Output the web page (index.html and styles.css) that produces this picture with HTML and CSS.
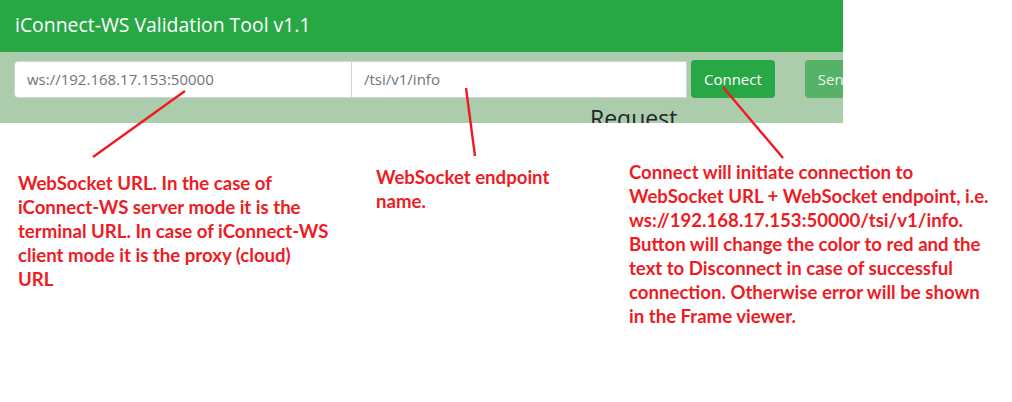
FILE: index.html
```html
<!DOCTYPE html>
<html lang="en">
<head>
<meta charset="utf-8">
<title>iConnect-WS Validation Tool v1.1</title>
<link rel="stylesheet" href="styles.css">
</head>
<body>
<div class="page">
  <div class="app">
    <header class="navbar">
      <span class="brand">iConnect-WS Validation Tool v1.1</span>
    </header>
    <section class="toolbar">
      <div class="controls">
        <div class="input-group">
          <input class="form-control url" type="text" placeholder="ws://192.168.17.153:50000">
          <input class="form-control endpoint" type="text" placeholder="/tsi/v1/info">
        </div>
        <button class="btn btn-connect" type="button">Connect</button>
        <button class="btn btn-send" type="button" disabled>Send</button>
      </div>
      <h4 class="panel-title">Request</h4>
    </section>
  </div>

  <svg class="arrows" width="1012" height="402" viewBox="0 0 1012 402">
    <line x1="185" y1="91" x2="93" y2="157"/>
    <line x1="466" y1="88" x2="475" y2="156"/>
    <line x1="723" y1="87" x2="783" y2="158"/>
  </svg>

  <p class="note note-url">WebSocket URL. In the case of<br>iConnect-WS server mode it is the<br>terminal URL. In case of iConnect-WS<br>client mode it is the proxy (cloud)<br>URL</p>
  <p class="note note-endpoint">WebSocket endpoint<br>name.</p>
  <p class="note note-connect">Connect will initiate connection to<br>WebSocket URL + WebSocket endpoint, i.e.<br>ws://192.168.17.153:50000/tsi/v1/info.<br>Button will change the color to red and the<br>text to Disconnect in case of successful<br>connection. Otherwise error will be shown<br>in the Frame viewer.</p>
</div>
</body>
</html>
```

FILE: styles.css
```css
* { box-sizing: border-box; }

html, body {
  margin: 0;
  padding: 0;
  background: #ffffff;
}

.page {
  position: relative;
  width: 1012px;
  height: 402px;
  overflow: hidden;
  font-family: "Open Sans", "Noto Sans", sans-serif;
}

.app {
  width: 843px;
  height: 123px;
  overflow: hidden;
}

.navbar {
  height: 52px;
  background: #28a745;
  padding: 0 15px;
  display: flex;
  align-items: center;
}

.brand {
  color: #ffffff;
  font-size: 19.4px;
  line-height: 24px;
  margin-top: -2px;
}

.toolbar {
  background: #accdac;
  height: 71px;
  padding: 8px 0 0 14px;
}

.controls {
  display: flex;
  align-items: center;
  height: 38px;
}

.input-group {
  display: flex;
  width: 673px;
}

.form-control {
  height: 37px;
  border: 1px solid #ced4da;
  background: #ffffff;
  font-family: inherit;
  font-size: 15px;
  color: #495057;
  padding: 0 12px;
  outline: none;
}

.form-control::placeholder {
  color: #6c757d;
  opacity: 1;
}

.url {
  width: 338px;
  border-radius: 4px 0 0 4px;
}

.endpoint {
  width: 335px;
  border-left: none;
  border-radius: 0;
}

.btn {
  height: 38px;
  border: none;
  border-radius: 4px;
  color: #ffffff;
  font-family: inherit;
  font-size: 15px;
  padding: 0 13px;
}

.btn-connect {
  margin-left: 4px;
  width: 84px;
  background: #28a745;
}

.btn-send {
  margin-left: 30px;
  width: 70px;
  background: #55b267;
  text-align: left;
  color: #ecf6ee;
}

.panel-title {
  margin: 6px 0 0 576px;
  font-size: 23px;
  font-weight: 400;
  line-height: 28px;
  color: #212529;
}

.arrows {
  position: absolute;
  left: 0;
  top: 0;
  pointer-events: none;
}

.arrows line {
  stroke: #ed1c24;
  stroke-width: 2.4;
}

.note {
  position: absolute;
  margin: 0;
  color: #ed1c24;
  font-family: "Lato", "Liberation Sans", sans-serif;
  font-weight: 700;
  font-size: 18.6px;
  line-height: 24px;
  white-space: nowrap;
}

.note-url { left: 18px; top: 171px; }
.note-endpoint { left: 376px; top: 165px; }
.note-connect { left: 629px; top: 160px; }
```
